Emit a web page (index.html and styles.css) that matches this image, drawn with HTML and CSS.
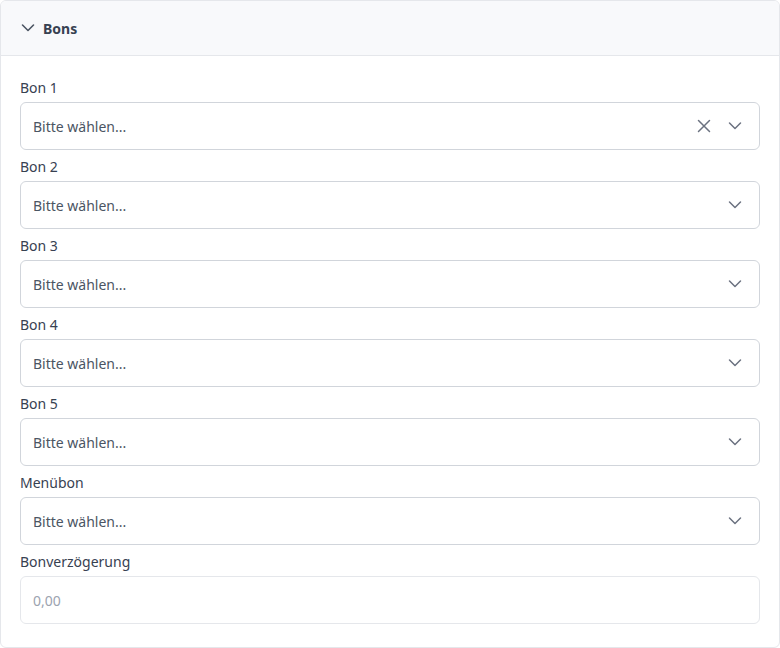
FILE: index.html
```html
<!DOCTYPE html>
<html lang="de">
<head>
<meta charset="utf-8">
<link rel="stylesheet" href="styles.css">
</head>
<body>
<div class="card">
  <div class="card-header">
    <svg class="hdr-chevron" width="14" height="14" viewBox="0 0 14 14"><path d="M1.5 4 L7 9.5 L12.5 4" fill="none" stroke="#4b5563" stroke-width="1.6" stroke-linecap="round" stroke-linejoin="round"/></svg>
    <span class="hdr-title">Bons</span>
  </div>
  <div class="card-body">
    <div class="field">
      <label class="lbl">Bon 1</label>
      <div class="select">
        <span class="ph">Bitte wählen...</span>
        <svg class="ico" width="14" height="14" viewBox="0 0 14 14"><path d="M1.5 1.5 L12.5 12.5 M12.5 1.5 L1.5 12.5" fill="none" stroke="#6b7280" stroke-width="1.5" stroke-linecap="round"/></svg>
        <svg class="ico chev" width="14" height="14" viewBox="0 0 14 14"><path d="M1.5 4 L7 9.5 L12.5 4" fill="none" stroke="#6b7280" stroke-width="1.5" stroke-linecap="round" stroke-linejoin="round"/></svg>
      </div>
    </div>
    <div class="field">
      <label class="lbl">Bon 2</label>
      <div class="select">
        <span class="ph">Bitte wählen...</span>
        <svg class="ico chev" width="14" height="14" viewBox="0 0 14 14"><path d="M1.5 4 L7 9.5 L12.5 4" fill="none" stroke="#6b7280" stroke-width="1.5" stroke-linecap="round" stroke-linejoin="round"/></svg>
      </div>
    </div>
    <div class="field">
      <label class="lbl">Bon 3</label>
      <div class="select">
        <span class="ph">Bitte wählen...</span>
        <svg class="ico chev" width="14" height="14" viewBox="0 0 14 14"><path d="M1.5 4 L7 9.5 L12.5 4" fill="none" stroke="#6b7280" stroke-width="1.5" stroke-linecap="round" stroke-linejoin="round"/></svg>
      </div>
    </div>
    <div class="field">
      <label class="lbl">Bon 4</label>
      <div class="select">
        <span class="ph">Bitte wählen...</span>
        <svg class="ico chev" width="14" height="14" viewBox="0 0 14 14"><path d="M1.5 4 L7 9.5 L12.5 4" fill="none" stroke="#6b7280" stroke-width="1.5" stroke-linecap="round" stroke-linejoin="round"/></svg>
      </div>
    </div>
    <div class="field">
      <label class="lbl">Bon 5</label>
      <div class="select">
        <span class="ph">Bitte wählen...</span>
        <svg class="ico chev" width="14" height="14" viewBox="0 0 14 14"><path d="M1.5 4 L7 9.5 L12.5 4" fill="none" stroke="#6b7280" stroke-width="1.5" stroke-linecap="round" stroke-linejoin="round"/></svg>
      </div>
    </div>
    <div class="field">
      <label class="lbl">Menübon</label>
      <div class="select">
        <span class="ph">Bitte wählen...</span>
        <svg class="ico chev" width="14" height="14" viewBox="0 0 14 14"><path d="M1.5 4 L7 9.5 L12.5 4" fill="none" stroke="#6b7280" stroke-width="1.5" stroke-linecap="round" stroke-linejoin="round"/></svg>
      </div>
    </div>
    <div class="field">
      <label class="lbl">Bonverzögerung</label>
      <div class="input">
        <span class="ph light">0,00</span>
      </div>
    </div>
  </div>
</div>
</body>
</html>
```
FILE: styles.css
```css
html, body {
  margin: 0;
  padding: 0;
  background: #ffffff;
}
body {
  font-family: "Noto Sans", "Open Sans", sans-serif;
  font-size: 14px;
  color: #374151;
}
.card {
  width: 780px;
  height: 648px;
  box-sizing: border-box;
  border: 1px solid #e5e7eb;
  border-radius: 6px;
  overflow: hidden;
  background: #fff;
}
.card-header {
  height: 55px;
  box-sizing: border-box;
  background: #f8f9fb;
  border-bottom: 1px solid #e5e7eb;
  display: flex;
  align-items: center;
  padding-left: 20px;
  gap: 8px;
}
.hdr-chevron { display: block; }
.hdr-title {
  font-weight: 700;
  font-size: 14px;
  color: #374151;
}
.card-body {
  padding: 21px 19px 0 19px;
  display: flex;
  flex-direction: column;
  gap: 6px;
}
.field {
  display: flex;
  flex-direction: column;
  gap: 4px;
}
.lbl {
  line-height: 21px;
  font-size: 14px;
  color: #374151;
}
.select, .input {
  height: 48px;
  box-sizing: border-box;
  border: 1px solid #d1d5db;
  border-radius: 6px;
  display: flex;
  align-items: center;
  padding: 0 17px 0 12px;
  gap: 17px;
}
.input { border-color: #e5e7eb; }
.ph {
  flex: 1;
  color: #4b5563;
}
.ph.light { color: #9ca3af; }
.ico { display: block; flex: none; }
```
